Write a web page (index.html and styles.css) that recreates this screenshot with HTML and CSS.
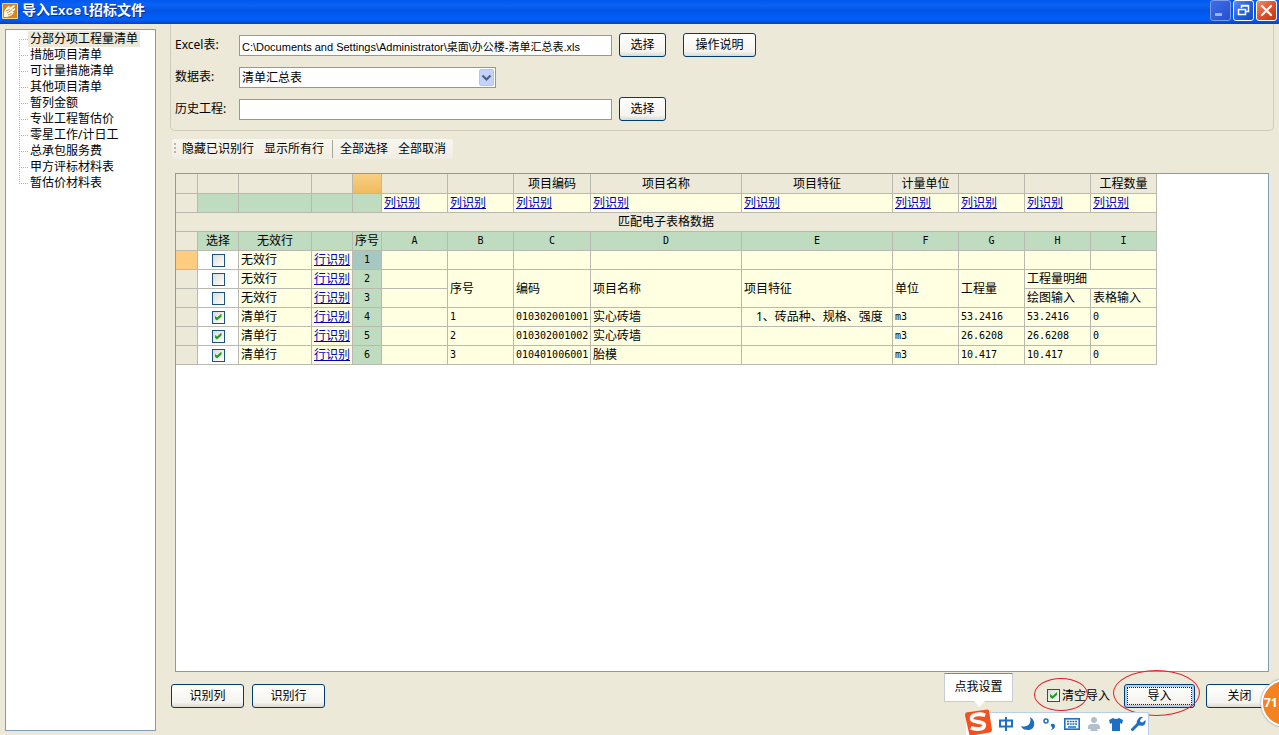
FILE: index.html
```
<!DOCTYPE html>
<html lang="zh-CN">
<head>
<meta charset="utf-8">
<title>导入Excel招标文件</title>
<link rel="stylesheet" href="styles.css">
</head>
<body>
<header class="titlebar">
  <svg class="app-icon" viewBox="0 0 16 16" aria-hidden="true">
    <rect width="16" height="16" rx="1" fill="#f6d98c"/>
    <rect x="1" y="1" width="14" height="14" fill="#d9871c"/>
    <path d="M2 9c1-2 2-5 5-6 1 0 1 1 0 2l5-3 1 1-4 4 4-2v2l-3 2 2 0-2 3-5 2-3 0z" fill="#fffbe8"/>
    <path d="M4 8l4-2M5 10l5-3M6 12l4-2" stroke="#c9781c" stroke-width=".8"/>
  </svg>
  <h1 class="title">导入<span class="title-latin">Excel</span>招标文件</h1>
  <div class="window-buttons">
    <button class="win-btn win-min" aria-label="最小化"><svg viewBox="0 0 19 19"><rect x="4" y="12" width="7" height="3" fill="#9fb2f2"/></svg></button>
    <button class="win-btn" aria-label="还原"><svg viewBox="0 0 19 19"><path d="M7.5 7V4.5h7v6H12M7 5h8M4.500 8.500h7v5h-7zM4 8.500h8" fill="none" stroke="#fff" stroke-width="1.500"/></svg></button>
    <button class="win-btn win-close" aria-label="关闭窗口"><svg viewBox="0 0 19 19"><path d="M5 5l9 9M14 5l-9 9" stroke="#fff" stroke-width="2.300" stroke-linecap="round"/></svg></button>
  </div>
</header>

<main class="workspace">
  <nav class="sidebar" aria-label="清单类型">
    <ul class="tree">
      <li><button class="tree-item selected">分部分项工程量清单</button></li>
      <li><button class="tree-item">措施项目清单</button></li>
      <li><button class="tree-item">可计量措施清单</button></li>
      <li><button class="tree-item">其他项目清单</button></li>
      <li><button class="tree-item">暂列金额</button></li>
      <li><button class="tree-item">专业工程暂估价</button></li>
      <li><button class="tree-item">零星工作/计日工</button></li>
      <li><button class="tree-item">总承包服务费</button></li>
      <li><button class="tree-item">甲方评标材料表</button></li>
      <li><button class="tree-item">暂估价材料表</button></li>
    </ul>
  </nav>

  <section class="content">
    <form class="source">
      <div class="field">
        <label class="field-label" for="excel">Excel表:</label>
        <input class="text-input" id="excel" type="text" value="C:\Documents and Settings\Administrator\桌面\办公楼-清单汇总表.xls">
        <button class="btn btn-small" type="button">选择</button>
        <button class="btn btn-help" type="button">操作说明</button>
      </div>
      <div class="field">
        <label class="field-label" for="sheet">数据表:</label>
        <div class="select-wrap">
          <select class="select" id="sheet"><option>清单汇总表</option></select>
          <svg class="select-arrow" viewBox="0 0 15 17" aria-hidden="true"><rect x=".5" y=".5" width="14" height="16" rx="1.500" fill="#c3d3fb" stroke="#b3c6f3"/><path d="M3.500 6.500l4 4 4-4" fill="none" stroke="#4d6185" stroke-width="2.200"/></svg>
        </div>
      </div>
      <div class="field">
        <label class="field-label" for="history">历史工程:</label>
        <input class="text-input" id="history" type="text">
        <button class="btn btn-small" type="button">选择</button>
      </div>
    </form>

    <div class="toolbar" role="toolbar">
      <span class="grip"></span>
      <button class="tool">隐藏已识别行</button>
      <button class="tool">显示所有行</button>
      <span class="tool-divider"></span>
      <button class="tool">全部选择</button>
      <button class="tool">全部取消</button>
    </div>

    <div class="grid-panel">
      <table class="grid">
        <colgroup>
          <col class="c-mark"><col class="c-pick"><col class="c-type"><col class="c-pick"><col class="c-seq">
          <col class="c-std"><col class="c-std"><col class="c-code"><col class="c-wide"><col class="c-wide">
          <col class="c-std"><col class="c-std"><col class="c-std"><col class="c-std">
        </colgroup>
        <tbody>
          <tr class="names"><td></td><td></td><td></td><td></td><td class="active-col"></td><td></td><td></td><th>项目编码</th><th>项目名称</th><th>项目特征</th><th>计量单位</th><td></td><td></td><th>工程数量</th></tr>
          <tr><td class="head"></td><td class="green"></td><td class="green"></td><td class="green"></td><td class="green"></td><td><a href="#">列识别</a></td><td><a href="#">列识别</a></td><td><a href="#">列识别</a></td><td><a href="#">列识别</a></td><td><a href="#">列识别</a></td><td><a href="#">列识别</a></td><td><a href="#">列识别</a></td><td><a href="#">列识别</a></td><td><a href="#">列识别</a></td></tr>
          <tr><th class="head" colspan="14">匹配电子表格数据</th></tr>
          <tr class="letters"><td class="head"></td><th>选择</th><th>无效行</th><th></th><th>序号</th><th class="num">A</th><th class="num">B</th><th class="num">C</th><th class="num">D</th><th class="num">E</th><th class="num">F</th><th class="num">G</th><th class="num">H</th><th class="num">I</th></tr>
          <tr><td class="active-row"></td><td class="pick"><input class="check" type="checkbox" aria-label="选择第1行"></td><td>无效行</td><td><a href="#">行识别</a></td><th class="num current">1</th><td></td><td></td><td></td><td></td><td></td><td></td><td></td><td></td><td></td></tr>
          <tr><td class="head"></td><td class="pick"><input class="check" type="checkbox" aria-label="选择第2行"></td><td>无效行</td><td><a href="#">行识别</a></td><th class="num green">2</th><td></td><td rowspan="2">序号</td><td rowspan="2">编码</td><td rowspan="2">项目名称</td><td rowspan="2">项目特征</td><td rowspan="2">单位</td><td rowspan="2">工程量</td><td colspan="2">工程量明细</td></tr>
          <tr><td class="head"></td><td class="pick"><input class="check" type="checkbox" aria-label="选择第3行"></td><td>无效行</td><td><a href="#">行识别</a></td><th class="num green">3</th><td></td><td>绘图输入</td><td>表格输入</td></tr>
          <tr><td class="head"></td><td class="pick"><input class="check" type="checkbox" aria-label="选择第4行" checked></td><td>清单行</td><td><a href="#">行识别</a></td><th class="num green">4</th><td></td><td class="num">1</td><td class="num">010302001001</td><td>实心砖墙</td><td class="feature">1、砖品种、规格、强度</td><td class="num">m3</td><td class="num">53.2416</td><td class="num">53.2416</td><td class="num">0</td></tr>
          <tr><td class="head"></td><td class="pick"><input class="check" type="checkbox" aria-label="选择第5行" checked></td><td>清单行</td><td><a href="#">行识别</a></td><th class="num green">5</th><td></td><td class="num">2</td><td class="num">010302001002</td><td>实心砖墙</td><td></td><td class="num">m3</td><td class="num">26.6208</td><td class="num">26.6208</td><td class="num">0</td></tr>
          <tr><td class="head"></td><td class="pick"><input class="check" type="checkbox" aria-label="选择第6行" checked></td><td>清单行</td><td><a href="#">行识别</a></td><th class="num green">6</th><td></td><td class="num">3</td><td class="num">010401006001</td><td>胎模</td><td></td><td class="num">m3</td><td class="num">10.417</td><td class="num">10.417</td><td class="num">0</td></tr>
        </tbody>
      </table>
    </div>

    <footer class="actions">
      <button class="btn btn-wide">识别列</button>
      <button class="btn btn-wide">识别行</button>
      <label class="clear-option"><input class="check" type="checkbox" checked>清空导入</label>
      <div class="import-wrap"><button class="btn btn-import">导入</button></div>
      <button class="btn btn-wide btn-close">关闭</button>
    </footer>
  </section>
</main>

<div class="ime">
  <div class="ime-tip">点我设置</div>
  <div class="ime-bar">
    <svg class="ime-logo" viewBox="0 0 28 28" aria-hidden="true"><path d="M3 4L23 1q2 0 2 2l3 19q0 2-2 3L7 28q-3 0-3-3L0 7q0-3 3-3z" fill="#f4511e"/><path d="M21 7C15 5 6 6 7 11c1 4 13 2 13 6 0 5-9 5-14 3" fill="none" stroke="#fff" stroke-width="4"/></svg>
    <svg class="ime-icon" viewBox="0 0 16 16" aria-hidden="true"><path d="M2 4.500h12v6H2zM8 1v14" fill="none" stroke="#1c6fc4" stroke-width="2"/></svg>
    <svg class="ime-icon" viewBox="0 0 16 16" aria-hidden="true"><path d="M10 1c6 3 6 13-2 13-3 0-6-1-7-4 6 2 11-2 9-9z" fill="#1c6fc4"/></svg>
    <svg class="ime-icon" viewBox="0 0 16 16" aria-hidden="true"><circle cx="4" cy="5" r="2" fill="none" stroke="#1c6fc4" stroke-width="1.500"/><path d="M9 8q4-1 4 2 0 3-4 4 2-2 1-3-2-1-1-3z" fill="#1c6fc4"/></svg>
    <svg class="ime-icon" viewBox="0 0 16 16" aria-hidden="true"><rect x=".8" y="2.800" width="14.400" height="10.400" fill="#fff" stroke="#1c6fc4" stroke-width="1.600"/><path d="M3 5.500h10M3 8h10" stroke="#1c6fc4" stroke-width="1.500" stroke-dasharray="2 .7"/><path d="M4 11h8" stroke="#1c6fc4" stroke-width="1.500"/></svg>
    <svg class="ime-icon" viewBox="0 0 16 16" aria-hidden="true"><circle cx="8" cy="4" r="3" fill="#b4bfcb"/><path d="M4 8h8l2 2v3h-3l1 2H4l1-2H2v-3z" fill="#b4bfcb"/></svg>
    <svg class="ime-icon" viewBox="0 0 16 16" aria-hidden="true"><path d="M5 2q3 2 6 0l4 2-1 4-2-1v8H4V7L2 8 1 4z" fill="#1c6fc4"/></svg>
    <svg class="ime-icon" viewBox="0 0 16 16" aria-hidden="true"><path d="M2.500 13.500L9 7" stroke="#1c6fc4" stroke-width="3" stroke-linecap="round"/><path d="M13 1L10 4l.5 2 2 .5L15.500 4q.5 4-2 5.500-4 1-6-1T8 3q2-3 5-2z" fill="#1c6fc4"/></svg>
  </div>
</div>
<div class="badge">71</div>
</body>
</html>
```

FILE: styles.css
```
* { box-sizing: border-box; }

body {
  margin: 0;
  height: 100vh;
  display: flex;
  flex-direction: column;
  overflow: hidden;
  position: relative;
  background: #ece9d8;
  color: #000;
  font: 12px/16px "Noto Sans", "Noto Sans CJK SC", sans-serif;
}

button, input, select { font: inherit; color: inherit; margin: 0; }
button { padding: 0; border: 0; background: none; white-space: nowrap; }
svg { display: block; }

/* Title bar */
.titlebar {
  flex: none;
  display: flex;
  align-items: center;
  gap: 4px;
  height: 24px;
  padding: 0 2px 3px;
  background: linear-gradient(#0058ee 0, #0a62f5 20%, #0055e6 45%, #0060fa 80%, #0044c8 100%);
}
.app-icon { width: 16px; height: 16px; }
.title {
  flex: 1;
  margin: 0;
  color: #fff;
  font: bold 14px/20px "Noto Sans CJK SC", sans-serif;
  text-shadow: 1px 1px #0a2f8c;
}
.title-latin { font: bold 13px/20px "Liberation Mono", monospace; }
.window-buttons { display: flex; gap: 2px; }
.win-btn {
  width: 21px;
  height: 21px;
  border: 1px solid #fff;
  border-radius: 3px;
  background: linear-gradient(135deg, #5d8cf5, #2460e0 50%, #1746c0);
}
.win-min { border-color: #7c9cf0; background: linear-gradient(135deg, #3f6ce6, #2450cf); }
.win-close { background: linear-gradient(135deg, #f09070, #e0502c 50%, #c23410); }

/* Body */
.workspace { flex: 1; display: flex; min-height: 0; padding-left: 5px; gap: 14px; }
.sidebar {
  flex: none;
  width: 151px;
  margin: 5px 0 4px;
  padding: 1px 0 0 13px;
  border: 1px solid #7f9db9;
  background: #fff;
}
.tree { margin: 0; padding: 0; list-style: none; }
.tree li {
  display: flex;
  align-items: center;
  height: 16px;
  background: repeating-linear-gradient(#b8b5a8 0 1px, transparent 1px 2px) 0 0 / 1px 100% no-repeat;
}
.tree li:first-child { background-size: 1px 50%; background-position: 0 100%; }
.tree li:last-child { background-size: 1px 50%; }
.tree li::before { content: ""; width: 9px; border-top: 1px dotted #b8b5a8; }
.tree-item { height: 16px; padding: 0 2px; line-height: 16px; }
.tree-item.selected { background: #ece9d8; }

.content { flex: 1; display: flex; flex-direction: column; min-width: 0; }

/* Source form */
.source {
  flex: none;
  display: grid;
  gap: 8px;
  margin-right: 5px;
  padding: 9px 4px;
  border: 1px solid #cfccbb;
  border-top: 0;
  border-radius: 0 0 5px 5px;
}
.field { display: flex; align-items: center; height: 24px; }
.field-label { width: 64px; flex: none; }
.text-input {
  width: 373px;
  height: 21px;
  margin-top: 1px;
  padding: 0 2px;
  border: 1px solid #7f9db9;
  background: #fff;
  font-family: "Liberation Sans", "Noto Sans CJK SC", sans-serif;
  font-size: 11px;
}
.select-wrap { position: relative; width: 257px; margin-top: 1px; }
.select {
  display: block;
  width: 100%;
  height: 21px;
  padding: 0 2px;
  appearance: none;
  border: 1px solid #7f9db9;
  border-radius: 0;
  background: #fff;
}
.select-arrow { position: absolute; top: 2px; right: 2px; width: 15px; height: 17px; pointer-events: none; }

.btn {
  height: 24px;
  border: 1px solid #003c74;
  border-radius: 3px;
  background: linear-gradient(#fff, #f4f3ee 80%, #dcd8cc);
}
.btn-small { width: 47px; margin-left: 7px; }
.btn-help { width: 73px; margin-left: 17px; }
.btn-wide { width: 73px; flex: none; }

/* Toolbar */
.toolbar {
  flex: none;
  align-self: flex-start;
  display: flex;
  align-items: center;
  height: 20px;
  margin: 8px 0 14px 2px;
  padding: 0 7px 0 2px;
  border-radius: 3px;
  background: linear-gradient(#f7f6f0, #f0eee3);
}
.grip { width: 2px; height: 12px; margin-right: 6px; background: repeating-linear-gradient(#b8b5a8 0 2px, transparent 2px 4px); }
.tool + .tool { margin-left: 10px; }
.tool-divider { width: 1px; height: 18px; margin: 0 7px 0 8px; background: #a9a694; }

/* Grid */
.grid-panel {
  flex: 1;
  min-height: 0;
  margin: 0 10px 0 5px;
  overflow: hidden;
  border: 1px solid #7f9db9;
  background: #fff;
}
.grid { table-layout: fixed; width: 981px; border-collapse: separate; border-spacing: 0; }
.c-mark { width: 22px; }
.c-pick { width: 41px; }
.c-type { width: 73px; }
.c-seq { width: 29px; }
.c-std { width: 66px; }
.c-code { width: 77px; }
.c-wide { width: 151px; }
.grid td, .grid th {
  height: 19px;
  padding: 0 0 0 2px;
  border: solid #b9b9b0;
  border-width: 0 1px 1px 0;
  background: #ffffe1;
  font: 12px/18px "Noto Sans", "Noto Sans CJK SC", sans-serif;
  text-align: left;
  white-space: nowrap;
  overflow: hidden;
}
.grid .num { font: 10px/18px "DejaVu Sans Mono", monospace; }
.grid th { padding: 0; text-align: center; }
.grid a { color: #0000c0; text-decoration: underline; }
.grid .names td, .grid .names th { height: 20px; background: #ece9d8; }
.grid .head { background: #ece9d8; }
.grid .green, .grid .letters th { background: #c0dcc0; }
.grid .names .active-col { background: linear-gradient(#f8cf85, #efbb5c); }
.grid .active-row { background: #ffcc80; }
.grid .current { background: #a6c8c0; }
.grid .pick { padding: 0; background: #fff; text-align: center; }
.grid .pick .check { display: block; margin: 0 auto; }
.grid .feature { padding-left: 14px; }

.check {
  appearance: none;
  flex: none;
  width: 13px;
  height: 13px;
  border: 1px solid #1c5180;
  background: linear-gradient(135deg, #dcdcd7, #fff);
}
.check:checked::before {
  content: "";
  display: block;
  width: 7px;
  height: 7px;
  margin: 2px;
  background: #21a121;
  clip-path: polygon(0 28%, 36% 58%, 100% 0, 100% 42%, 36% 100%, 0 70%);
}

/* Footer */
.actions { flex: none; display: flex; align-items: center; height: 63px; padding: 0 0 16px 1px; gap: 8px; }
.clear-option { position: relative; display: flex; align-items: center; gap: 2px; margin-left: auto; }
.import-wrap { position: relative; margin-left: 6px; }
.btn-import {
  display: block;
  width: 71px;
  box-shadow: inset 0 0 0 2px #b5cdf5;
  outline: 1px dotted #222;
  outline-offset: -4px;
}
.btn-close { margin-left: 3px; padding-right: 6px; }
.clear-option::after, .import-wrap::after {
  content: "";
  position: absolute;
  border: 1px solid #e0202c;
  border-radius: 50%;
  pointer-events: none;
}
.clear-option::after { left: -13px; top: -10px; width: 52px; height: 31px; }
.import-wrap::after { inset: -14px -5px -8px -11px; }

/* Input method bar floating over the window */
.ime { position: absolute; right: 130px; bottom: 0; width: 205px; }
.ime-tip {
  position: relative;
  width: 69px;
  height: 29px;
  margin-bottom: 10px;
  border: 1px solid #c6ccd2;
  border-top-color: #d9683c;
  background: #fff;
  line-height: 26px;
  text-align: center;
}
.ime-tip::after {
  content: "";
  position: absolute;
  top: 27px;
  left: 29px;
  width: 11px;
  height: 6px;
  background: #fff;
  clip-path: polygon(0 0, 100% 0, 50% 100%);
}
.ime-bar {
  display: flex;
  align-items: center;
  gap: 6px;
  height: 23px;
  margin-left: 22px;
  border-top: 1px solid #b9cfe6;
  border-right: 1px solid #b9cfe6;
  background: #fff;
}
.ime-logo { flex: none; width: 27px; height: 28px; margin-left: -1px; margin-top: -4px; }
.ime-icon { flex: none; width: 16px; height: 16px; }

.badge {
  position: absolute;
  right: -30px;
  bottom: 8px;
  width: 48px;
  height: 48px;
  padding-left: 1px;
  border: 2px solid #fff;
  border-radius: 50%;
  background: #f58220;
  box-shadow: 0 0 2px #777;
  color: #fff;
  font: bold 12px/44px "Noto Sans", sans-serif;
}
```
